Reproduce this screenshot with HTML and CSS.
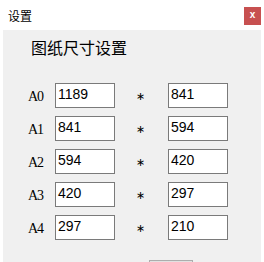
FILE: index.html
```html
<!DOCTYPE html>
<html>
<head>
<meta charset="utf-8">
<link rel="stylesheet" href="styles.css">
</head>
<body>
<div class="window">
  <div class="titlebar">
    <span class="title">设置</span>
    <span class="close">x</span>
  </div>
  <div class="content">
    <div class="heading">图纸尺寸设置</div>
    <div class="grid">
      <span class="label">A0</span><div class="box">1189</div><span class="star">∗</span><div class="box">841</div>
      <span class="label">A1</span><div class="box">841</div><span class="star">∗</span><div class="box">594</div>
      <span class="label">A2</span><div class="box">594</div><span class="star">∗</span><div class="box">420</div>
      <span class="label">A3</span><div class="box">420</div><span class="star">∗</span><div class="box">297</div>
      <span class="label">A4</span><div class="box">297</div><span class="star">∗</span><div class="box">210</div>
    </div>
    <div class="actions"><div class="btn"></div></div>
  </div>
</div>
</body>
</html>
```
FILE: styles.css
```css
html, body {
  margin: 0;
  padding: 0;
  background: #ffffff;
  overflow: hidden;
}
.window {
  width: 264px;
  height: 262px;
  display: flex;
  flex-direction: column;
  overflow: hidden;
  font-family: "Liberation Sans", "Noto Sans CJK SC", sans-serif;
}
.titlebar {
  height: 30px;
  flex: none;
  display: flex;
  align-items: flex-start;
  justify-content: space-between;
  padding: 0 3px 0 8px;
}
.title {
  font-size: 12px;
  line-height: 14px;
  margin-top: 9px;
  color: #000;
  font-family: "Noto Sans CJK SC", sans-serif;
}
.close {
  width: 17px;
  height: 18px;
  margin-top: 7px;
  background: #c75050;
  color: #fff;
  font-size: 10px;
  font-weight: bold;
  line-height: 16px;
  text-align: center;
}
.content {
  flex: 1;
  margin: 0 3px;
  background: #f0f0f0;
  padding: 7px 0 0 24px;
}
.heading {
  font-family: "Noto Sans CJK SC", sans-serif;
  font-size: 16px;
  line-height: 20px;
  padding-left: 4px;
  color: #000;
}
.grid {
  margin-top: 26px;
  display: grid;
  grid-template-columns: 28px 60px 53px 60px;
  grid-auto-rows: 25px;
  row-gap: 8px;
  align-items: center;
}
.label {
  font-family: "Liberation Serif", serif;
  font-size: 14px;
  letter-spacing: -1px;
  padding-left: 1px;
  padding-top: 3px;
  color: #000;
}
.box {
  box-sizing: border-box;
  height: 25px;
  border: 1px solid #7a7a7a;
  background: #fff;
  font-size: 14px;
  line-height: 21px;
  padding-left: 2px;
  color: #000;
}
.star {
  font-family: "DejaVu Sans", sans-serif;
  font-size: 11px;
  padding-left: 21px;
  padding-top: 2px;
  color: #000;
}
.actions {
  margin-top: 20px;
  padding-left: 122px;
}
.btn {
  width: 44px;
  height: 22px;
  box-sizing: border-box;
  border: 1px solid #adadad;
  background: #e1e1e1;
}
```
